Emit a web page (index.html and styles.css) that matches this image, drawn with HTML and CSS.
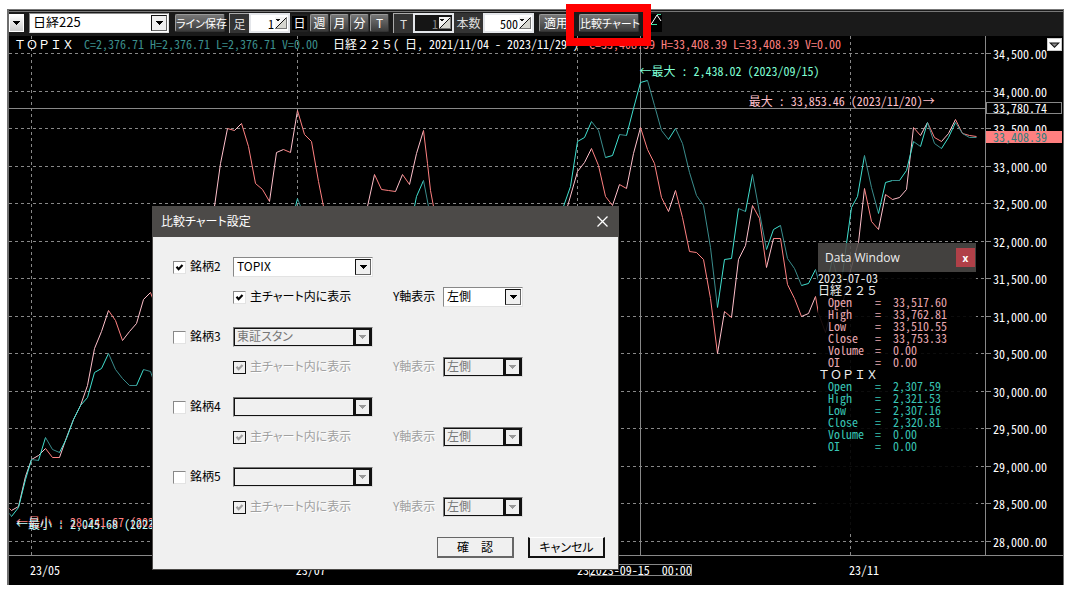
FILE: index.html
```html
<!DOCTYPE html>
<html lang="ja">
<head>
<meta charset="utf-8">
<title>比較チャート設定</title>
<link rel="stylesheet" href="styles.css">
</head>
<body>
<svg class="defs" width="0" height="0" aria-hidden="true">
  <symbol id="arrow" viewBox="0 0 7 4"><path d="M0 0h7v1h-1v1h-1v1h-1v1h-1v-1h-1v-1h-1v-1h-1z" fill="currentColor"/></symbol>
  <symbol id="spin" viewBox="0 0 12 12"><path d="M0 0h12v12H0z" fill="#f4f4f4"/><path d="M12 0v12H0z" fill="#d6d6d0"/><path d="M1 11L11 1" stroke="#111"/><path d="M1 2h4v1h-1v1h-2v-1h-1z" fill="#111"/><path d="M0 11.500h12M11.500 0v12" fill="none" stroke="#777"/></symbol>
  <symbol id="tick" viewBox="0 0 9 9"><path d="M1.5 3.8L3.6 6.2L7.5 2" fill="none" stroke="currentColor" stroke-width="2.2"/></symbol>
</svg>
<main class="app">
  <header class="toolbar">
    <button class="menu-btn" aria-label="メニュー"><svg class="arrow"><use href="#arrow"/></svg></button>
    <span class="drop symbol"><select aria-label="銘柄"><option>日経225</option></select><span class="drop-btn"><svg class="arrow"><use href="#arrow"/></svg></span></span>
    <button class="tool line-save">ライン保存</button>
    <div class="field"><label for="bar">足</label><span class="spin"><input id="bar" value="1"><svg><use href="#spin"/></svg></span></div>
    <div class="periods">
      <button class="tool period selected">日</button><button class="tool period">週</button><button class="tool period">月</button><button class="tool period">分</button><button class="tool period">T</button>
    </div>
    <div class="field counts"><label for="tick-n">T</label><span class="spin off"><input id="tick-n" value="1" disabled><svg><use href="#spin"/></svg></span><label class="wide" for="count">本数</label><span class="spin long"><input id="count" value="500"><svg><use href="#spin"/></svg></span></div>
    <button class="tool apply">適用</button>
    <button class="tool compare">比較チャート</button>
    <svg class="wave" viewBox="0 0 12 18"><path d="M0 0h12v18H0z" fill="#000"/><path d="M0 10.500h7M7 .5h4" stroke="#40e0a0"/><path d="M0 10.500L2 9L7 1L11 7" fill="none" stroke="#fff"/></svg>
  </header>

  <section class="chart">
    <div class="plot">
      <svg id="plot" class="canvas" viewBox="9 36 976 519" preserveAspectRatio="none" aria-hidden="true"></svg>
      <div class="legend">
        <span class="full">ＴＯＰＩＸ</span><span class="teal">C=2,376.71 H=2,376.71 L=2,376.71 V=0.00</span>
        <span class="second"><span class="full">日経２２５</span>( 日, 2021/11/04 - 2023/11/29 )</span><span class="red">C=33,408.39 H=33,408.39 L=33,408.39 V=0.00</span>
      </div>
      <span class="note max-topix">←最大 : 2,438.02 (2023/09/15)</span>
      <span class="note max-nikkei">最大 : 33,853.46 (2023/11/20)→</span>
      <span class="note min-nikkei">←最小 : 28,241.67 (2023/04/26)</span>
      <span class="note min-topix">←最小 : 2,045.68 (2023/04/26)</span>
    </div>
    <aside class="scale">
      <ul>
        <li>34,500.00</li><li>34,000.00</li><li>33,500.00</li><li>33,000.00</li><li>32,500.00</li><li>32,000.00</li><li>31,500.00</li><li>31,000.00</li><li>30,500.00</li><li>30,000.00</li><li>29,500.00</li><li>29,000.00</li><li>28,500.00</li><li>28,000.00</li>
      </ul>
      <span class="tag cursor-tag">33,780.74</span>
      <span class="tag last-tag">33,408.39</span>
      <button class="scale-btn" aria-label="表示設定"><svg viewBox="0 0 11 6"><path d="M0 .5h11L5.500 6z" fill="#111"/><path d="M2.500 1.500h6L5.500 4.500z" fill="#888"/></svg></button>
    </aside>
    <footer class="dates">
      <span class="date may">23/05</span><span class="date jul">23/07</span><span class="date sep">23/09</span><span class="date nov">23/11</span>
      <span class="date cursor-date">2023-09-15&nbsp; 00:00</span>
    </footer>
  </section>

  <section class="data-window">
    <header><h2>Data Window</h2><button aria-label="閉じる">x</button></header>
    <div class="readout">
      <p>2023-07-03</p>
      <table class="nikkei"><caption class="full">日経２２５</caption>
        <tr><th>Open</th><td>=</td><td>33,517.60</td></tr><tr><th>High</th><td>=</td><td>33,762.81</td></tr><tr><th>Low</th><td>=</td><td>33,510.55</td></tr><tr><th>Close</th><td>=</td><td>33,753.33</td></tr><tr><th>Volume</th><td>=</td><td>0.00</td></tr><tr><th>OI</th><td>=</td><td>0.00</td></tr>
      </table>
      <table class="topix"><caption class="full">ＴＯＰＩＸ</caption>
        <tr><th>Open</th><td>=</td><td>2,307.59</td></tr><tr><th>High</th><td>=</td><td>2,321.53</td></tr><tr><th>Low</th><td>=</td><td>2,307.16</td></tr><tr><th>Close</th><td>=</td><td>2,320.81</td></tr><tr><th>Volume</th><td>=</td><td>0.00</td></tr><tr><th>OI</th><td>=</td><td>0.00</td></tr>
      </table>
    </div>
  </section>

  <form class="dialog" role="dialog" aria-labelledby="dialog-title">
    <header><h1 id="dialog-title">比較チャート設定</h1><button type="button" class="close" aria-label="閉じる"><svg viewBox="0 0 11 11"><path d="M.5 .5l10 10M10.500 .5l-10 10" stroke="#fff" stroke-width="1.300"/></svg></button></header>
    <div class="dialog-body">
      <fieldset>
        <label class="check"><span class="box"><input type="checkbox" checked><svg><use href="#tick"/></svg></span><span class="text">銘柄2</span></label>
        <span class="drop name"><select aria-label="銘柄2の名称"><option>TOPIX</option></select><span class="drop-btn"><svg class="arrow"><use href="#arrow"/></svg></span></span>
        <div class="options"><label class="check"><span class="box"><input type="checkbox" checked><svg><use href="#tick"/></svg></span><span class="text">主チャート内に表示</span></label><label class="text" for="y2">Y軸表示</label><span class="drop side"><select id="y2"><option>左側</option></select><span class="drop-btn"><svg class="arrow"><use href="#arrow"/></svg></span></span></div>
      </fieldset>
      <fieldset>
        <label class="check"><span class="box"><input type="checkbox"></span><span class="text">銘柄3</span></label>
        <span class="drop name off"><select aria-label="銘柄3の名称" disabled><option>東証スタン</option></select><span class="drop-btn"><svg class="arrow"><use href="#arrow"/></svg></span></span>
        <div class="options off"><label class="check"><span class="box"><input type="checkbox" checked disabled><svg><use href="#tick"/></svg></span><span class="text">主チャート内に表示</span></label><label class="text" for="y3">Y軸表示</label><span class="drop side off"><select id="y3" disabled><option>左側</option></select><span class="drop-btn"><svg class="arrow"><use href="#arrow"/></svg></span></span></div>
      </fieldset>
      <fieldset>
        <label class="check"><span class="box"><input type="checkbox"></span><span class="text">銘柄4</span></label>
        <span class="drop name off"><select aria-label="銘柄4の名称" disabled><option></option></select><span class="drop-btn"><svg class="arrow"><use href="#arrow"/></svg></span></span>
        <div class="options off"><label class="check"><span class="box"><input type="checkbox" checked disabled><svg><use href="#tick"/></svg></span><span class="text">主チャート内に表示</span></label><label class="text" for="y4">Y軸表示</label><span class="drop side off"><select id="y4" disabled><option>左側</option></select><span class="drop-btn"><svg class="arrow"><use href="#arrow"/></svg></span></span></div>
      </fieldset>
      <fieldset>
        <label class="check"><span class="box"><input type="checkbox"></span><span class="text">銘柄5</span></label>
        <span class="drop name off"><select aria-label="銘柄5の名称" disabled><option></option></select><span class="drop-btn"><svg class="arrow"><use href="#arrow"/></svg></span></span>
        <div class="options off"><label class="check"><span class="box"><input type="checkbox" checked disabled><svg><use href="#tick"/></svg></span><span class="text">主チャート内に表示</span></label><label class="text" for="y5">Y軸表示</label><span class="drop side off"><select id="y5" disabled><option>左側</option></select><span class="drop-btn"><svg class="arrow"><use href="#arrow"/></svg></span></span></div>
      </fieldset>
      <div class="actions"><button type="button" class="ok">確　認</button><button type="button" class="cancel">キャンセル</button></div>
    </div>
  </form>
  <div class="highlight"></div>
</main>
<script src="chart.js"></script>
</body>
</html>
```

FILE: styles.css
```css
* { box-sizing: border-box; }

body {
  margin: 0;
  min-height: 100vh;
  display: flex;
  background: #fff;
  color: #000;
  font: 12px/12px "Noto Sans CJK JP", sans-serif;
  font-feature-settings: "palt";
}

button, input, select {
  font: inherit;
  font-feature-settings: inherit;
  color: inherit;
  margin: 0;
  padding: 0;
}

.defs { position: absolute; }

.app {
  position: relative;
  flex: 1;
  display: flex;
  flex-direction: column;
  margin: 9px 4px 4px 7px;
  border-left: 2px solid #6e6e6e;
  border-right: 1px solid #6e6e6e;
  background: #000;
}

/* toolbar */
.toolbar {
  display: flex;
  align-items: center;
  height: 27px;
  padding-bottom: 2px;
  border-top: 3px double #777;
  background: #1a1a1a;
}

.menu-btn {
  display: grid;
  place-items: center;
  width: 15px;
  height: 18px;
  margin-right: 5px;
  border: 1px solid #fff;
  border-radius: 0;
  background: linear-gradient(#fff, #ccc);
}

.arrow { width: 7px; height: 4px; display: block; }

.drop {
  position: relative;
  display: flex;
  height: 20px;
  border: 1px solid #e3e3e3;
  border-top-color: #888;
  border-left-color: #888;
  background: #fff;
}

.drop select {
  appearance: none;
  flex: 1;
  border: 0;
  border-radius: 0;
  padding: 0 2px 3px 3px;
  background: transparent;
  opacity: 1;
}

.drop-btn {
  display: grid;
  place-items: center;
  width: 16px;
  height: 16px;
  margin: 1px 1px 1px 0;
  border: 1px solid #111;
  border-right-color: #666;
  border-bottom-color: #666;
  background: #f0f0f0;
  color: #000;
  pointer-events: none;
}

.drop.off { background: #f0f0f0; color: #777; border-color: #777 #ddd #ddd #777; }
.drop.off select { border: 1px solid #111; color: #777; padding-left: 2px; }
.drop.off .drop-btn { width: 18px; height: 18px; margin: 0; border: 2px solid #111; border-right-width: 3px; color: #999; }

.symbol { width: 140px; margin-right: 6px; font-size: 13px; }

.tool {
  height: 18px;
  border: 1px solid #999;
  border-color: #999 #333 #333 #999;
  border-radius: 2px;
  background: linear-gradient(#777, #3c3c3c);
  color: #fff;
  text-align: center;
  white-space: nowrap;
}

.line-save { width: 50px; margin-right: 4px; font-size: 11px; }

.field { display: flex; height: 20px; }

.field label {
  display: grid;
  place-items: center;
  width: 20px;
  border-top: 1px solid #aaa;
  border-left: 1px solid #aaa;
  background: #333;
  color: #ddd;
}

.field .wide { width: 29px; border: 0; }

.spin {
  display: flex;
  align-items: center;
  width: 41px;
  border: 2px solid #e4e6ea;
  background: #fff;
}

.spin input {
  flex: 1;
  min-width: 0;
  height: 16px;
  border: 0;
  background: transparent;
  text-align: right;
  font-feature-settings: "hwid";
}

.spin svg { width: 12px; height: 12px; margin: 0 1px; }
.spin.off { background: #151515; color: #888; }
.spin.long { width: 51px; }

.periods { display: flex; gap: 1px; margin-right: 4px; }
.period { width: 19px; }
.period.selected { background: #000; border-color: #222; border-width: 2px; }
.counts { margin-right: 5px; }
.apply { width: 34px; margin-right: 6px; }
.compare { width: 60px; margin-right: 11px; font-size: 11px; }
.wave { width: 12px; height: 18px; }

/* chart */
.chart {
  flex: 1;
  display: grid;
  grid-template-columns: 1fr 78px;
  grid-template-rows: 1fr 30px;
  color: #fff;
  font-feature-settings: "hwid";
}

.full { font-feature-settings: normal; }

.plot {
  position: relative;
  overflow: hidden;
}

.canvas { position: absolute; width: 100%; height: 100%; }
.canvas polyline { fill: none; vector-effect: non-scaling-stroke; }
.canvas line { stroke: #888; vector-effect: non-scaling-stroke; }
.canvas .dash { stroke-dasharray: 3 3; }
.nikkei-up { stroke: #ffc0cb; }
.nikkei-down { stroke: #ff8080; }
.topix-up { stroke: #40e0d0; }
.topix-down { stroke: #3a8c8c; }

.legend {
  position: relative;
  display: flex;
  gap: 10px;
  padding: 2px 5px;
  white-space: pre;
}

.second { margin-left: 5px; }
.teal { color: #3c8f8c; }
.red { color: #ff8080; }

.note { position: absolute; white-space: pre; }
.max-topix { left: 64.600%; top: 29px; color: #7fffd4; }
.max-nikkei { left: 75.800%; top: 59px; color: #ffc0cb; }
.min-nikkei { left: 7px; bottom: 27px; color: #ff8080; }
.min-topix { left: 7px; bottom: 25px; color: #c0ffff; }

.scale {
  position: relative;
  border-left: 1px solid #888;
}

.scale ul {
  display: flex;
  flex-direction: column;
  justify-content: space-between;
  height: 100%;
  margin: 0;
  padding: 12px 0 7px 7px;
  list-style: none;
}

.scale li { position: relative; }

.scale li::before {
  content: "";
  position: absolute;
  left: -7px;
  top: 5px;
  width: 5px;
  border-top: 1px solid #888;
}

.tag {
  position: absolute;
  left: 0;
  right: 1px;
  padding-left: 6px;
  border: 1px solid #888;
  line-height: 10px;
  background: #000;
}

.cursor-tag { top: 66px; }
.last-tag { top: 95px; background: #ff8080; border-color: #ff8080; color: #2f8080; }

.scale-btn {
  position: absolute;
  top: 2px;
  right: 1px;
  display: grid;
  place-items: center;
  width: 15px;
  height: 13px;
  border: 1px solid #ccc;
  border-radius: 0;
  background: #fff;
}

.scale-btn svg { width: 11px; height: 6px; }

.dates {
  position: relative;
  grid-column: 1 / -1;
  border-top: 1px solid #888;
}

.date { position: absolute; top: 8px; white-space: pre; }
.may { left: 21px; }
.jul { left: 27.200%; }
.sep { left: 53.900%; }
.nov { left: 79.700%; }

.cursor-date {
  left: 55%;
  width: 103px;
  border: 1px solid #888;
  line-height: 10px;
  background: #000;
}

/* data window */
.data-window {
  position: absolute;
  top: 234px;
  right: 87px;
  width: 158px;
  color: #eee;
}

.data-window header {
  display: flex;
  align-items: center;
  justify-content: space-between;
  height: 29px;
  padding: 0 1px 0 7px;
  background: rgba(76, 74, 72, .88);
}

.data-window h2 {
  margin: 0;
  font: 12px/16px "Open Sans", sans-serif;
  color: #eee;
}

.data-window button {
  width: 19px;
  height: 19px;
  border: 0;
  background: #b04048;
  color: #fff;
  font: bold 10px/16px "Open Sans", sans-serif;
}

.readout {
  height: 260px;
  background: rgba(0, 0, 0, .9);
  font-feature-settings: "hwid";
}

.readout p { margin: 0; }

.readout table {
  border-collapse: collapse;
  table-layout: fixed;
  width: 100%;
}

.readout caption { text-align: left; }
.readout th, .readout td { padding: 0; font-weight: normal; text-align: left; }
.readout th { width: 57px; padding-left: 10px; }
.readout td:nth-child(2) { width: 18px; }
.nikkei tr { color: #e8a8b0; }
.topix tr { color: #38c4b4; }

/* settings dialog */
.dialog {
  position: absolute;
  left: 143px;
  top: 197px;
  width: 467px;
  border: 1px solid #4c4a48;
  background: #f0f0f0;
}

.dialog header {
  display: flex;
  align-items: center;
  justify-content: space-between;
  height: 30px;
  padding: 0 10px 2px 8px;
  background: #4c4a48;
  color: #fff;
}

.dialog h1 { margin: 0; font: inherit; }
.close { display: grid; border: 0; background: none; }
.close svg { width: 11px; height: 11px; }

.dialog-body {
  display: grid;
  gap: 20px;
  padding: 20px 13px 11px 20px;
}

fieldset {
  display: grid;
  grid-template-columns: 60px 1fr;
  row-gap: 10px;
  margin: 0;
  padding: 0;
  border: 0;
}

.check { display: flex; align-items: center; gap: 4px; white-space: nowrap; }

.text { padding-bottom: 2px; white-space: nowrap; }

.box { position: relative; display: grid; width: 13px; height: 13px; }

.box input {
  appearance: none;
  width: 13px;
  height: 13px;
  border: 1px solid #e3e3e3;
  border-top-color: #888;
  border-left-color: #888;
  background: #fff;
}

.box svg { position: absolute; left: 2px; top: 2px; width: 9px; height: 9px; }

.name { width: 140px; }
.side { width: 80px; }

.options {
  grid-column: 2;
  display: grid;
  grid-template-columns: 160px 50px 80px;
  align-items: center;
}

.options.off { color: #a0a0a0; text-shadow: 1px 1px #fff; }
.options.off .box input { border-color: #111; background: #f0f0f0; }
.options.off select { text-shadow: none; }

.actions { display: flex; justify-content: flex-end; gap: 14px; }

.actions button {
  width: 77px;
  height: 21px;
  padding-bottom: 1px;
  border-radius: 0;
  background: #f0f0f0;
}

.ok { border: 1px solid #666; border-right-width: 2px; border-bottom-width: 2px; }
.cancel { border: 2px solid #111; border-top: 1px solid #fff; }

/* marker round the compare button */
.highlight {
  position: absolute;
  left: 557px;
  top: -5px;
  width: 85px;
  height: 42px;
  border: 8px solid #f00;
  pointer-events: none;
}
```

FILE: chart.js
```js
const svg = document.getElementById("plot");

function add(tag, attrs) {
  const el = document.createElementNS("http://www.w3.org/2000/svg", tag);
  for (const key in attrs) el.setAttribute(key, attrs[key]);
  svg.appendChild(el);
}

for (let i = 0; i < 14; i++) {
  const y = Math.floor(53.5 + i * 37.54) + 0.5;
  add("line", { x1: 9, x2: 985, y1: y, y2: y, class: "dash" });
}
for (const x of [31.5, 297.5, 577.5, 850.5]) {
  add("line", { x1: x, x2: x, y1: 36, y2: 555, class: "dash" });
}
add("line", { x1: 9, x2: 985, y1: 108.5, y2: 108.5 });
add("line", { x1: 640.5, x2: 640.5, y1: 36, y2: 555 });

const nikkei = [
  [9,508],[11,510],[18,506],[25,476],[31,459],[38,455],[45,448],[52,457],[59,457],[66,437],[73,419],[80,405],[87,385],[94,348],[101,331],[108,310],[115,320],[122,340],[129,331],[136,323],[143,299],[150,292],[153,300],
  [214,206],[220,163],[227,128],[234,130],[241,123],[248,146],[255,183],[262,189],[269,201],[276,152],[283,149],[290,152],[297,110],[304,134],[311,141],[318,181],[323,206],
  [367,206],[374,174],[381,189],[388,190],[395,191],[402,174],[409,184],[416,153],[423,130],[427,163],[430,190],[433,206],
  [567,206],[577,171],[584,162],[591,148],[598,165],[605,196],[612,205],[619,184],[626,188],[633,153],[640,127],[647,149],[654,163],[661,197],[668,211],[675,190],[682,217],[689,251],[696,252],[703,259],[710,298],[717,353],[724,311],[731,317],[738,259],[745,245],[752,205],[759,218],[766,267],[773,238],[780,238],[787,284],[794,298],[801,316],[808,313],[815,296],[818,313],[825,332],[833,302],[840,312],[850,270],[858,242],[864,188],[871,221],[878,229],[885,194],[892,199],[899,197],[906,189],[913,127],[920,135],[927,122],[934,137],[941,141],[948,133],[955,119],[962,133],[969,135],[976,136]
];
const topix = [
  [9,513],[11,516],[18,507],[25,479],[31,459],[38,460],[45,437],[52,449],[59,452],[66,438],[73,419],[80,405],[87,397],[94,372],[101,368],[108,353],[115,369],[122,378],[129,385],[136,385],[143,369],[150,371],[153,380],
  [290,220],[295,206],[297,198],[300,206],[305,220],
  [410,220],[414,206],[416,196],[423,180],[428,206],[430,220],
  [563,206],[570,186],[577,141],[584,137],[591,121],[598,130],[605,157],[612,155],[619,134],[626,135],[633,108],[640,82],[647,80],[654,105],[661,130],[668,139],[675,128],[682,143],[689,172],[696,195],[703,205],[710,247],[717,307],[724,259],[731,258],[738,208],[745,211],[752,174],[759,212],[766,249],[773,229],[780,225],[787,258],[794,268],[801,285],[808,283],[815,269],[818,280],[825,290],[832,258],[840,290],[846,243],[851,207],[857,196],[864,155],[871,187],[878,213],[885,182],[892,180],[899,180],[906,170],[913,141],[920,146],[927,122],[934,143],[941,148],[948,137],[955,122],[962,133],[969,137],[976,137]
];

function draw(points, name) {
  for (let i = 1; i < points.length; i++) {
    const [x1, y1] = points[i - 1];
    const [x2, y2] = points[i];
    if (x2 - x1 > 30) continue;
    add("polyline", {
      points: `${x1 + 0.5},${y1 + 0.5} ${x2 + 0.5},${y2 + 0.5}`,
      class: name + (y2 < y1 ? "-up" : "-down")
    });
  }
}

draw(nikkei, "nikkei");
draw(topix, "topix");
```
